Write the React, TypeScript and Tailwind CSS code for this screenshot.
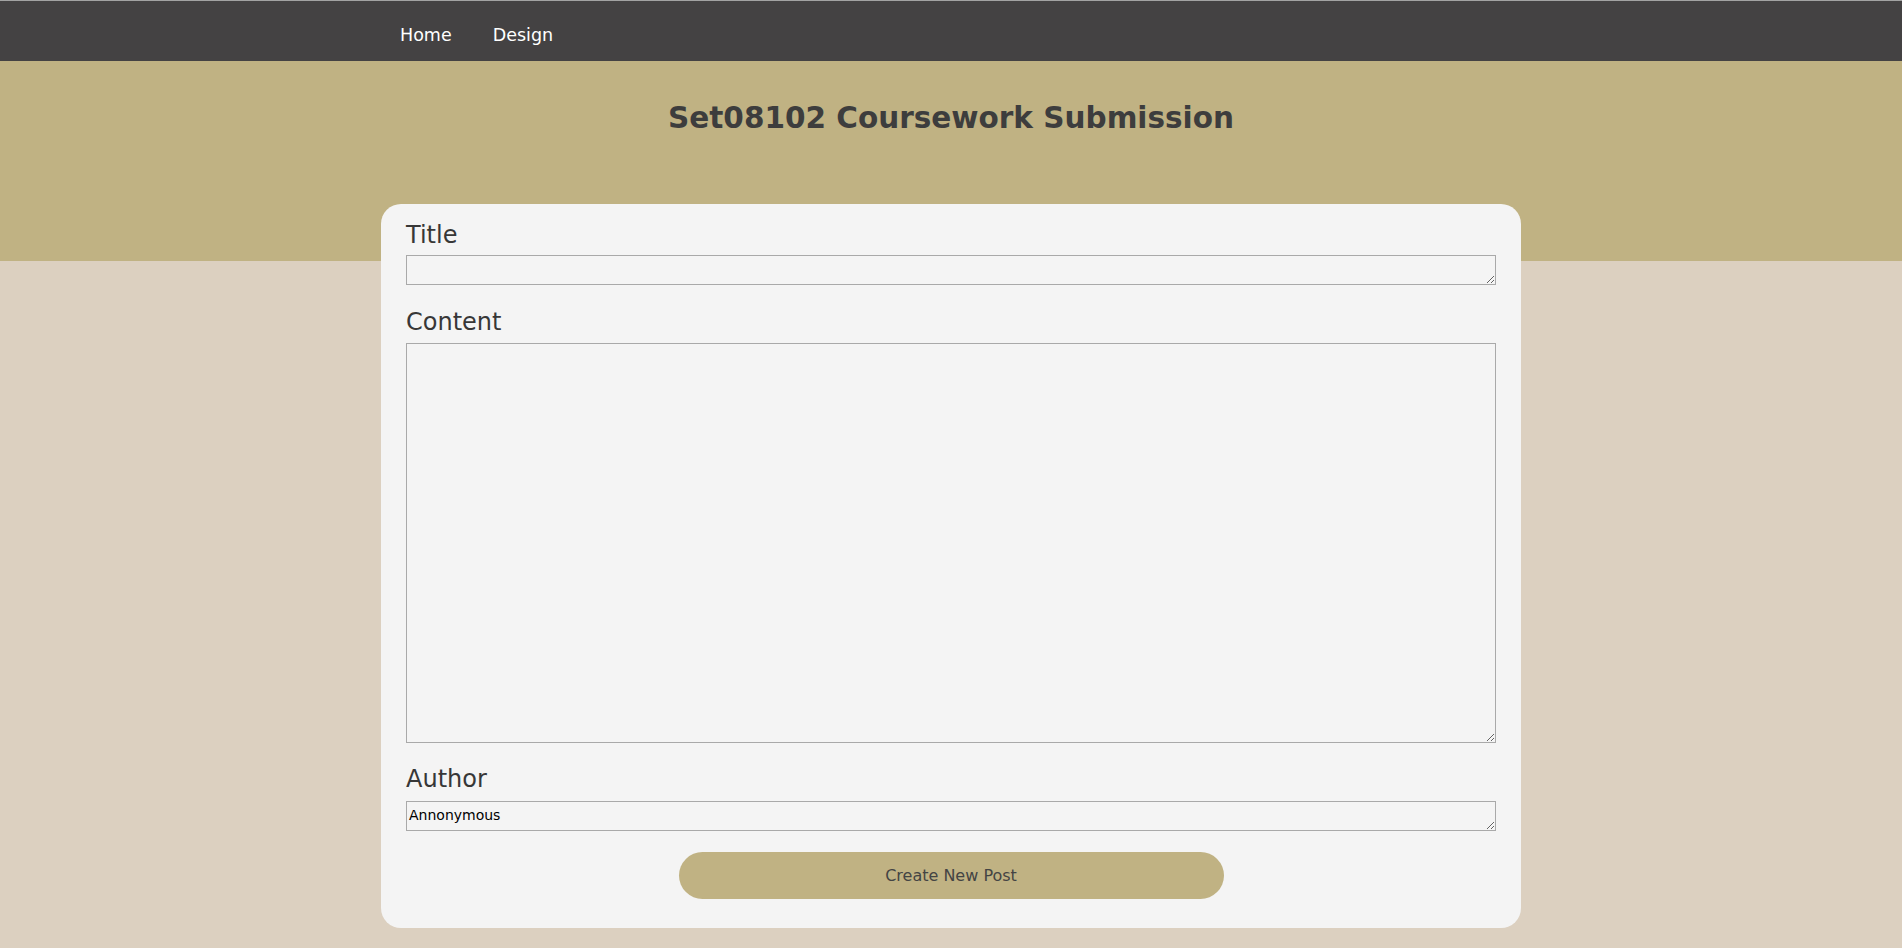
import React from "react";

export default function App() {
  return (
    <div
      className="min-h-screen bg-[#dcd0c0]"
      style={{ fontFamily: '"DejaVu Sans", Verdana, sans-serif' }}
    >
      <nav className="h-[61px] bg-[#444243] border-t border-[#a3a3a3]">
        <div className="mx-auto flex h-full w-[1140px] items-center gap-[41px] pl-[19px] pt-[10px] text-[17.5px] text-white">
          <a href="#" className="leading-none">Home</a>
          <a href="#" className="leading-none">Design</a>
        </div>
      </nav>
      <header className="h-[200px] bg-[#c0b283] pt-[40px]">
        <h1 className="text-center text-[29.5px] font-bold leading-[34px] text-[#3d3d3d]">
          Set08102 Coursework Submission
        </h1>
      </header>
      <main className="mx-auto -mt-[57px] w-[1140px] rounded-[20px] bg-[#f4f4f4] px-[25px] pt-[17px] pb-[29px] text-[#373737]">
        <form className="flex flex-col">
          <label className="mb-[6px] block text-[24px] leading-[28px]">Title</label>
          <textarea className="block h-[30px] w-full border border-[#a9a9a9] bg-transparent px-[2px] text-[14px] text-black outline-none" />
          <label className="mt-[23px] mb-[7px] block text-[24px] leading-[28px]">Content</label>
          <textarea className="block h-[400px] w-full border border-[#a9a9a9] bg-transparent px-[2px] text-[14px] text-black outline-none" />
          <label className="mt-[22px] mb-[8px] block text-[24px] leading-[28px]">Author</label>
          <textarea
            className="block h-[30px] w-full resize-y border border-[#a9a9a9] bg-transparent px-[2px] pt-[4px] pb-0 text-[14px] leading-[18px] text-black outline-none"
            defaultValue="Annonymous"
          />
          <div className="mt-[21px] flex justify-center">
            <button
              type="button"
              className="h-[47px] w-1/2 rounded-full bg-[#c0b283] text-[16px] text-[#444444]"
            >
              Create New Post
            </button>
          </div>
        </form>
      </main>
    </div>
  );
}
